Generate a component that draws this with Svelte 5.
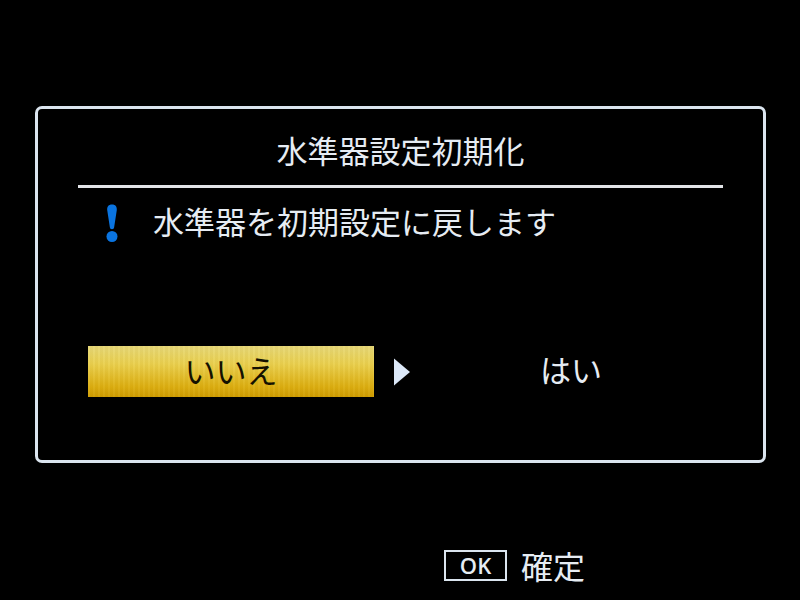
<script>
  const title = '水準器設定初期化';
  const message = '水準器を初期設定に戻します';
</script>

<main class="screen">
  <section class="dialog">
    <h1 class="title">{title}</h1>
    <div class="rule"></div>
    <div class="message">
      <svg class="alert" width="20" height="40" viewBox="0 0 20 40" aria-hidden="true">
        <path d="M10 .5c3.500 0 5 2.200 4.800 5.500L12.200 23c-.2 1.500-.9 2.200-2.200 2.200s-2-.7-2.200-2.200L5.200 6C5 2.700 6.500.5 10 .5z" fill="#0a74e0"/>
        <circle cx="10" cy="32.500" r="5.500" fill="#0a74e0"/>
      </svg>
      <span>{message}</span>
    </div>
    <div class="choices">
      <div class="selected">いいえ</div>
      <svg class="arrow" width="18" height="28" viewBox="0 0 18 28" aria-hidden="true">
        <path d="M1 0.500L17 14L1 27.500z" fill="#dce8f8"/>
      </svg>
      <div class="option">はい</div>
    </div>
  </section>
  <footer class="footer">
    <span class="ok">OK</span>
    <span class="confirm">確定</span>
  </footer>
</main>

<style>
  :global(body) {
    margin: 0;
    background: #000;
  }
  .screen {
    width: 800px;
    height: 600px;
    box-sizing: border-box;
    padding: 106px 34px 0 35px;
    background: #000;
    color: #e6ecf3;
    font-family: "Noto Sans CJK JP", "Liberation Sans", sans-serif;
    overflow: hidden;
  }
  .dialog {
    height: 357px;
    box-sizing: border-box;
    border: 3px solid #dbe5ef;
    border-radius: 7px;
    padding: 0 40px;
  }
  .title {
    margin: 0;
    height: 76px;
    display: flex;
    align-items: center;
    justify-content: center;
    padding-top: 4px;
    box-sizing: border-box;
    font-size: 31px;
    font-weight: 400;
    line-height: 1;
  }
  .rule {
    height: 3px;
    background: #e2e4e8;
  }
  .message {
    height: 72px;
    display: flex;
    align-items: center;
    font-size: 31px;
    line-height: 1;
  }
  .alert {
    margin-left: 24px;
    margin-right: 31px;
    flex: none;
  }
  .message span {
    margin-bottom: 7px;
  }
  .choices {
    margin-top: 86px;
    margin-left: 10px;
    display: flex;
    align-items: center;
  }
  .selected {
    width: 286px;
    height: 51px;
    background:
      repeating-linear-gradient(90deg, rgba(255, 255, 255, 0.04) 0 2px, rgba(120, 80, 0, 0.04) 2px 5px),
      linear-gradient(#e6d878 0%, #ead04e 35%, #dcae10 80%, #cf9c00 100%);
    color: #151100;
    font-size: 31px;
    line-height: 47px;
    text-align: center;
  }
  .arrow {
    margin-left: 19px;
    flex: none;
  }
  .option {
    margin-left: 129px;
    margin-bottom: 6px;
    font-size: 31px;
    line-height: 1;
  }
  .footer {
    margin-top: 86px;
    margin-left: 409px;
    display: flex;
    align-items: center;
  }
  .ok {
    width: 63px;
    height: 31px;
    box-sizing: border-box;
    border: 2px solid #dbe5ef;
    font-family: "Open Sans", "Liberation Sans", sans-serif;
    font-size: 22px;
    font-weight: 600;
    line-height: 27px;
    text-align: center;
  }
  .confirm {
    margin-left: 14px;
    font-size: 32px;
    line-height: 1;
  }
</style>
